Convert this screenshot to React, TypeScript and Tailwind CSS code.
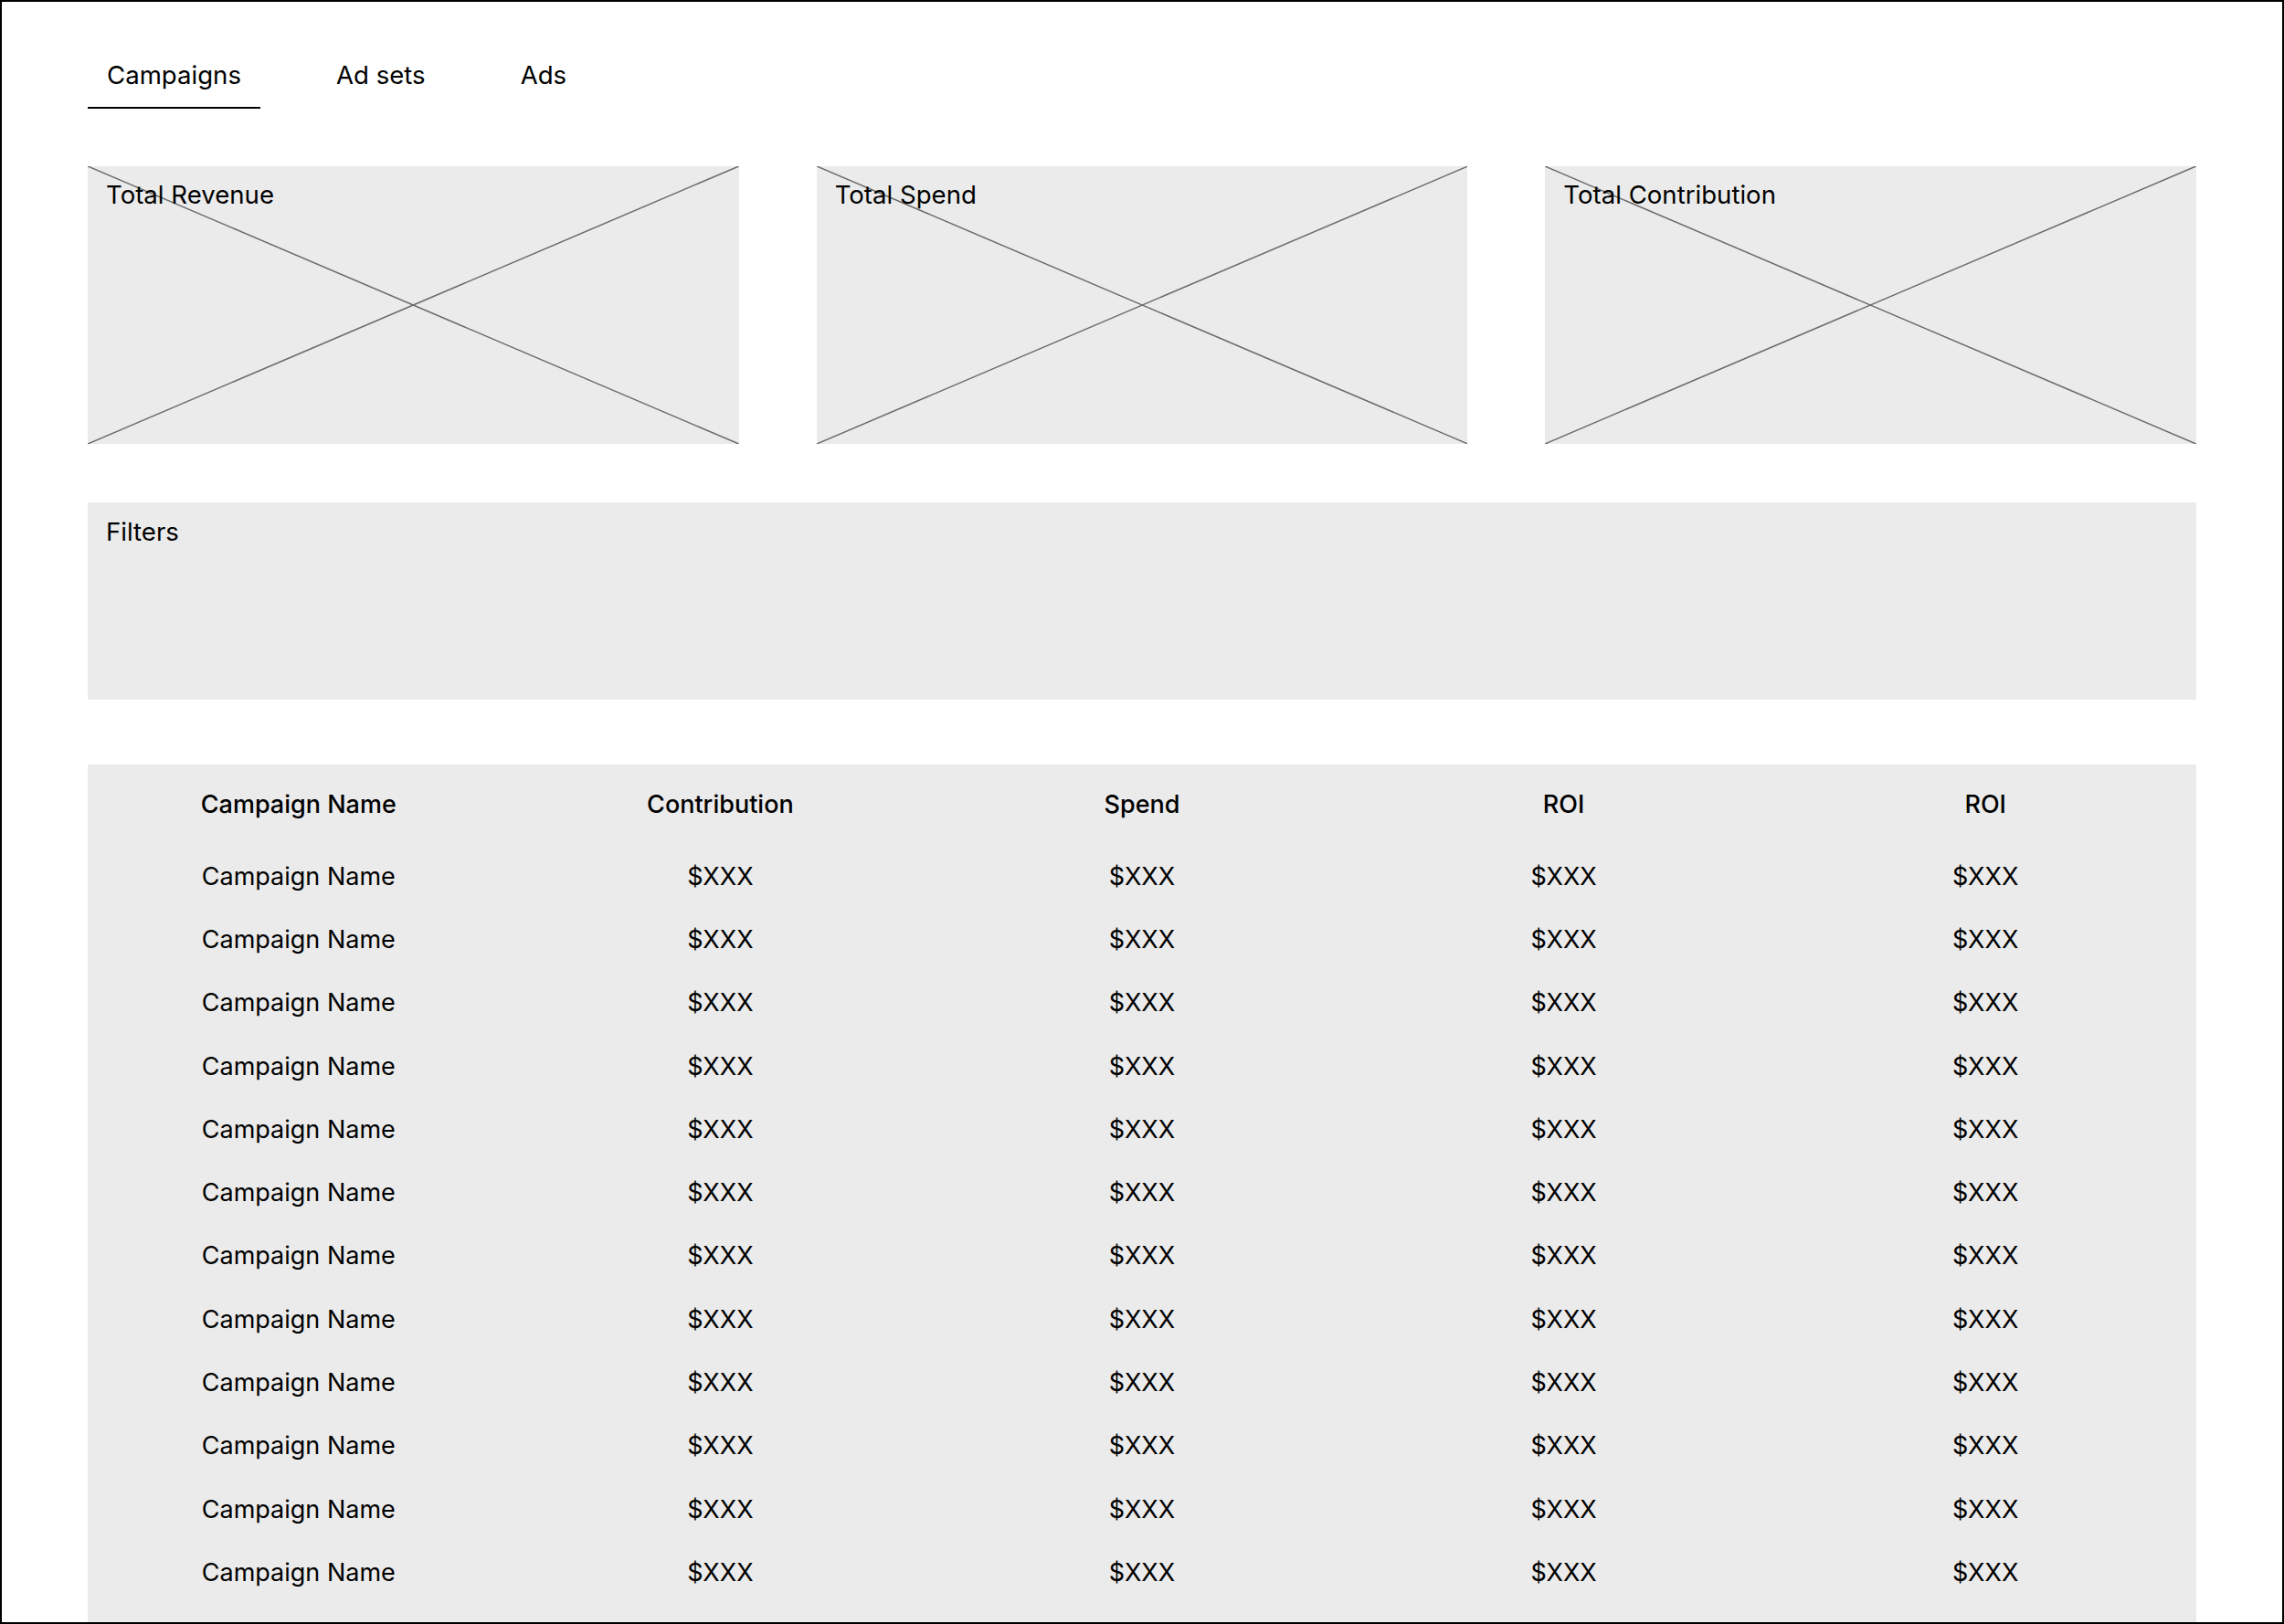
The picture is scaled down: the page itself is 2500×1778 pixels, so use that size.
import React from "react";

const font = { fontFamily: "Inter, 'Noto Sans', sans-serif" };

function Placeholder({ label }: { label: string }) {
  return (
    <div className="relative h-[304px] bg-[#ebebeb]">
      <svg
        className="absolute inset-0 h-full w-full"
        viewBox="0 0 100 100"
        preserveAspectRatio="none"
      >
        <line x1="0" y1="0" x2="100" y2="100" stroke="#6b6b6b" strokeWidth="1.5" vectorEffect="non-scaling-stroke" />
        <line x1="100" y1="0" x2="0" y2="100" stroke="#6b6b6b" strokeWidth="1.5" vectorEffect="non-scaling-stroke" />
      </svg>
      <div className="relative pl-[20px] pt-[11px] text-[27.6px] leading-[40px] text-black">{label}</div>
    </div>
  );
}

const cols = ["Campaign Name", "Contribution", "Spend", "ROI", "ROI"];

export default function App() {
  const rows = Array.from({ length: 12 });
  return (
    <div
      className="flex h-[1778px] w-[2500px] flex-col overflow-hidden border-2 border-black bg-white px-[94px] text-black"
      style={font}
    >
      <div className="mt-[60px] flex gap-[62px]">
        <div className="border-b-2 border-black px-[21px] pb-[15px] text-[27.6px] leading-[40px]">Campaigns</div>
        <div className="border-b-2 border-transparent px-[21px] pb-[15px] text-[27.6px] leading-[40px]">Ad sets</div>
        <div className="border-b-2 border-transparent px-[21px] pb-[15px] text-[27.6px] leading-[40px]">Ads</div>
      </div>

      <div className="mt-[63px] grid grid-cols-3 gap-x-[85px]">
        <Placeholder label="Total Revenue" />
        <Placeholder label="Total Spend" />
        <Placeholder label="Total Contribution" />
      </div>

      <div className="mt-[64px] h-[216px] shrink-0 bg-[#ebebeb] pl-[20px] pt-[12px] text-[27.6px] leading-[40px]">Filters</div>

      <div className="mt-[71px] min-h-0 flex-1 bg-[#ebebeb] pt-[9px]">
        <div className="grid h-[70px] grid-cols-5 items-center text-center text-[27px] font-medium leading-[40px]">
          {cols.map((c, i) => (
            <div key={i}>{c}</div>
          ))}
        </div>
        <div className="mt-[9px]">
          {rows.map((_, r) => (
            <div key={r} className="grid h-[69.3px] grid-cols-5 items-center text-center text-[27px] leading-[40px]">
              <div>Campaign Name</div>
              <div>$XXX</div>
              <div>$XXX</div>
              <div>$XXX</div>
              <div>$XXX</div>
            </div>
          ))}
        </div>
      </div>
    </div>
  );
}
